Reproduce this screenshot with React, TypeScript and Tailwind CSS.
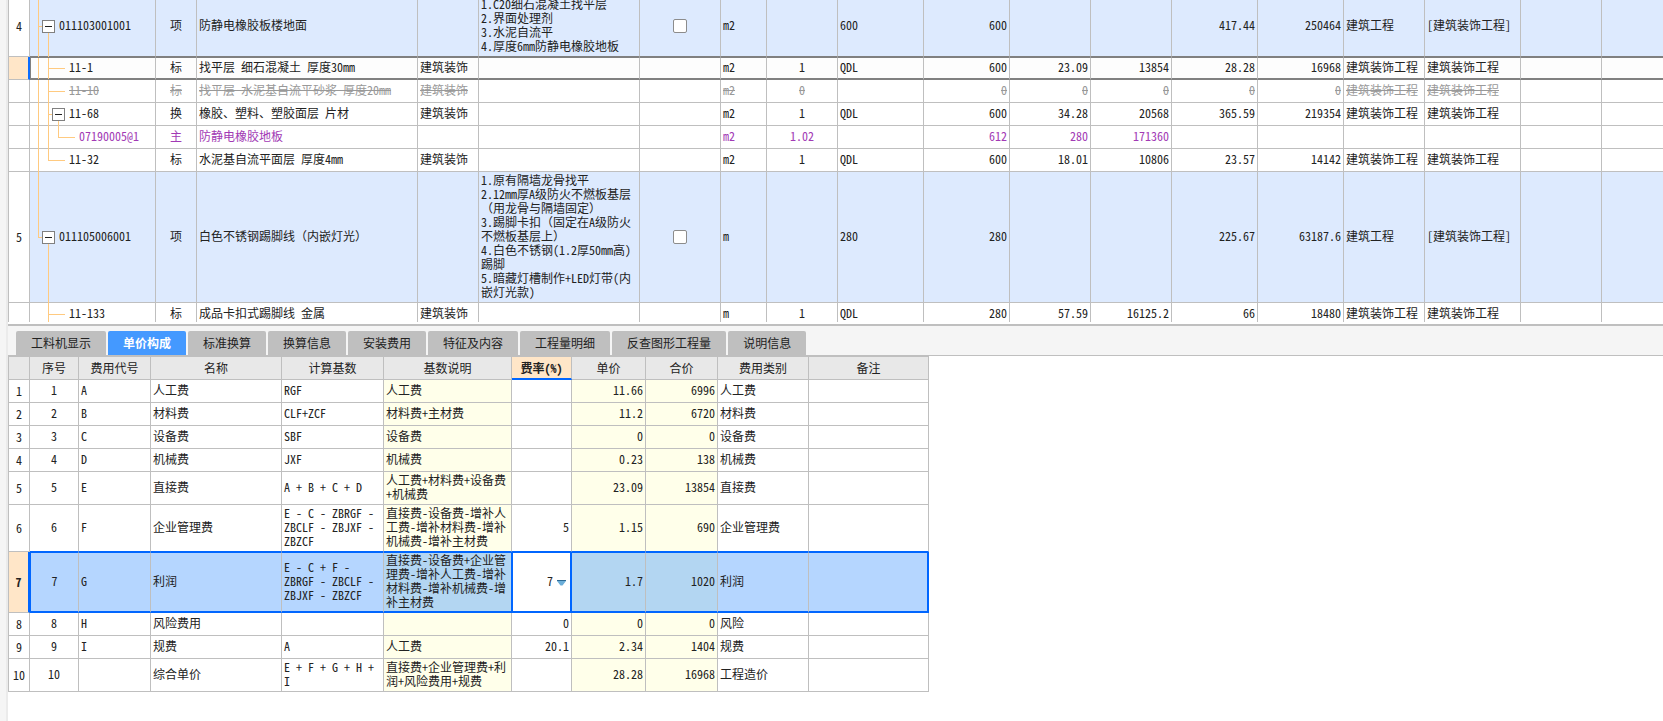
import React from "react";
import clsx from "clsx";

type Kind = "item" | "selected" | "deleted" | "main" | "normal";

interface BillRow {
  no?: string;
  code: string;
  kind: Kind;
  level: number;
  open?: boolean;
  guides: string[];
  type: string;
  name: string;
  spec?: string;
  feature?: string;
  unit: string;
  content?: string;
  expr?: string;
  qty: string;
  price?: string;
  total?: string;
  compPrice?: string;
  compTotal?: string;
  feeFile?: string;
  feeMajor?: string;
  height: string;
}

// Guide segments of the tree, drawn from the left edge of the code cell.
const TRUNK_1 = "left-[8px] top-0 -bottom-px w-px";
const TRUNK_1_END = "left-[8px] top-0 bottom-1/2 w-px";
const STUB_1 = "left-[8px] top-1/2 h-px w-[5px]";
const TRUNK_2 = "left-[18px] top-0 -bottom-px w-px";
const TRUNK_2_START = "left-[18px] top-1/2 -bottom-px w-px";
const TRUNK_2_END = "left-[18px] top-0 bottom-1/2 w-px";
const LEAF_2 = "left-[18px] top-1/2 h-px w-[17px]";
const STUB_2 = "left-[18px] top-1/2 h-px w-[5px]";
const TRUNK_3_START = "left-[28px] top-1/2 -bottom-px w-px";
const TRUNK_3_END = "left-[28px] top-0 bottom-1/2 w-px";
const LEAF_3 = "left-[28px] top-1/2 h-px w-[17px]";

const billRows: BillRow[] = [
  {
    no: "4", code: "011103001001", kind: "item", level: 0, open: true,
    guides: [TRUNK_1, STUB_1, TRUNK_2_START], type: "项", name: "防静电橡胶板楼地面",
    feature: "1.C20细石混凝土找平层\n2.界面处理剂\n3.水泥自流平\n4.厚度6mm防静电橡胶地板",
    unit: "m2", expr: "600", qty: "600", compPrice: "417.44", compTotal: "250464",
    feeFile: "建筑工程", feeMajor: "[建筑装饰工程]", height: "h-[62px]",
  },
  {
    code: "11-1", kind: "selected", level: 1, guides: [TRUNK_1, TRUNK_2, LEAF_2],
    type: "标", name: "找平层 细石混凝土 厚度30mm", spec: "建筑装饰", unit: "m2",
    content: "1", expr: "QDL", qty: "600", price: "23.09", total: "13854",
    compPrice: "28.28", compTotal: "16968", feeFile: "建筑装饰工程", feeMajor: "建筑装饰工程",
    height: "h-[23px]",
  },
  {
    code: "11-10", kind: "deleted", level: 1, guides: [TRUNK_1, TRUNK_2, LEAF_2],
    type: "标", name: "找平层 水泥基自流平砂浆 厚度20mm", spec: "建筑装饰", unit: "m2",
    content: "0", qty: "0", price: "0", total: "0", compPrice: "0", compTotal: "0",
    feeFile: "建筑装饰工程", feeMajor: "建筑装饰工程", height: "h-[23px]",
  },
  {
    code: "11-68", kind: "normal", level: 1, open: true,
    guides: [TRUNK_1, TRUNK_2, STUB_2, TRUNK_3_START],
    type: "换", name: "橡胶、塑料、塑胶面层 片材", spec: "建筑装饰", unit: "m2",
    content: "1", expr: "QDL", qty: "600", price: "34.28", total: "20568",
    compPrice: "365.59", compTotal: "219354", feeFile: "建筑装饰工程", feeMajor: "建筑装饰工程",
    height: "h-[23px]",
  },
  {
    code: "07190005@1", kind: "main", level: 2, guides: [TRUNK_1, TRUNK_2, TRUNK_3_END, LEAF_3],
    type: "主", name: "防静电橡胶地板", unit: "m2", content: "1.02", qty: "612",
    price: "280", total: "171360", height: "h-[23px]",
  },
  {
    code: "11-32", kind: "normal", level: 1, guides: [TRUNK_1, TRUNK_2_END, LEAF_2],
    type: "标", name: "水泥基自流平面层 厚度4mm", spec: "建筑装饰", unit: "m2",
    content: "1", expr: "QDL", qty: "600", price: "18.01", total: "10806",
    compPrice: "23.57", compTotal: "14142", feeFile: "建筑装饰工程", feeMajor: "建筑装饰工程",
    height: "h-[23px]",
  },
  {
    no: "5", code: "011105006001", kind: "item", level: 0, open: true,
    guides: [TRUNK_1_END, STUB_1, TRUNK_2_START], type: "项", name: "白色不锈钢踢脚线（内嵌灯光）",
    feature:
      "1.原有隔墙龙骨找平\n2.12mm厚A级防火不燃板基层\n（用龙骨与隔墙固定）\n3.踢脚卡扣（固定在A级防火\n不燃板基层上）\n4.白色不锈钢(1.2厚50mm高)\n踢脚\n5.暗藏灯槽制作+LED灯带(内\n嵌灯光款)",
    unit: "m", expr: "280", qty: "280", compPrice: "225.67", compTotal: "63187.6",
    feeFile: "建筑工程", feeMajor: "[建筑装饰工程]", height: "h-[131px]",
  },
  {
    code: "11-133", kind: "normal", level: 1, guides: [TRUNK_2, LEAF_2],
    type: "标", name: "成品卡扣式踢脚线 金属", spec: "建筑装饰", unit: "m",
    content: "1", expr: "QDL", qty: "280", price: "57.59", total: "16125.2",
    compPrice: "66", compTotal: "18480", feeFile: "建筑装饰工程", feeMajor: "建筑装饰工程",
    height: "h-[23px]",
  },
];

const billCols = [
  "w-[21px]", "w-[126px]", "w-[41px]", "w-[221px]", "w-[61px]", "w-[161px]", "w-[81px]",
  "w-[46px]", "w-[71px]", "w-[86px]", "w-[86px]", "w-[81px]", "w-[81px]", "w-[86px]",
  "w-[86px]", "w-[81px]", "w-[96px]", "w-[81px]", "",
];

// Full-width brackets keep their full width while Latin text is set half-width.
function withFullWidth(value?: string) {
  if (!value || !/[（）]/.test(value)) return value;
  return value.split(/([（）])/).map((part, i) =>
    part === "（" || part === "）" ? (
      <span key={i} className="[font-feature-settings:normal]">{part}</span>
    ) : (
      part
    ),
  );
}

function BillTableRow({ row, beforeSelected }: { row: BillRow; beforeSelected: boolean }) {
  const selected = row.kind === "selected";
  const line = clsx(
    "border-r border-r-[#bfbfbf] px-[2px]",
    selected
      ? "border-t border-b-2 border-t-[#808080] border-b-[#808080]"
      : beforeSelected
        ? "border-b border-b-[#808080]"
        : "border-b border-b-[#bfbfbf]",
  );
  const cell = clsx(line, "pb-[2px]");
  const text = (value?: string) =>
    row.kind === "deleted" && value ? <span className="line-through">{value}</span> : withFullWidth(value);

  return (
    <tr
      className={clsx(
        row.height,
        row.kind === "item" && "bg-[#ddeafe]",
        selected && "bg-[#fdfdfd]",
        row.kind === "deleted" && "text-[#999999]",
        row.kind === "main" && "text-[#a23ab5]",
      )}
    >
      <th
        scope="row"
        className={clsx(
          "border-b border-b-[#bfbfbf] text-center font-normal",
          selected
            ? "border-r-2 border-r-[#0a6cff] bg-[#ffe6c8]"
            : "border-r border-r-[#bfbfbf] bg-white",
        )}
      >
        {row.no}
      </th>
      <td
        className={clsx(
          cell,
          "relative",
          selected && "border-l border-l-[#808080]",
          row.level === 0 && "pl-[29px]",
          row.level === 1 && (selected ? "pl-[38px]" : "pl-[39px]"),
          row.level === 2 && "pl-[49px]",
        )}
      >
        {row.guides.map((guide) => (
          <span key={guide} aria-hidden="true" className={clsx("absolute bg-[#ffca80]", guide, selected && "-ml-px")} />
        ))}
        {row.open && (
          <button
            type="button"
            aria-label="折叠"
            className={clsx(
              "absolute top-1/2 -mt-[6px] flex size-[13px] items-center justify-center border border-[#808080] bg-white",
              row.level === 0 ? "left-[12px]" : "left-[22px]",
            )}
          >
            <span className="h-px w-[7px] bg-[#222222]" />
          </button>
        )}
        {text(row.code)}
      </td>
      <td className={clsx(cell, "text-center")}>{text(row.type)}</td>
      <td className={cell}>{text(row.name)}</td>
      <td className={cell}>{text(row.spec)}</td>
      <td className={clsx(cell, "whitespace-pre")}>{withFullWidth(row.feature)}</td>
      <td className={clsx(line, "text-center")}>
        {row.kind === "item" && (
          <input
            type="checkbox"
            aria-label="主要清单"
            className="mx-auto block size-[14px] appearance-none rounded-[2px] border border-[#8c8c8c] bg-white"
          />
        )}
      </td>
      <td className={cell}>{text(row.unit)}</td>
      <td className={clsx(cell, "text-center")}>{text(row.content)}</td>
      <td className={cell}>{text(row.expr)}</td>
      <td className={clsx(cell, "text-right")}>{text(row.qty)}</td>
      <td className={clsx(cell, "text-right")}>{text(row.price)}</td>
      <td className={clsx(cell, "text-right")}>{text(row.total)}</td>
      <td className={clsx(cell, "text-right")}>{text(row.compPrice)}</td>
      <td className={clsx(cell, "text-right")}>{text(row.compTotal)}</td>
      <td className={cell}>{text(row.feeFile)}</td>
      <td className={cell}>{text(row.feeMajor)}</td>
      <td className={cell} />
      <td className={clsx(cell, "border-r-0")} />
    </tr>
  );
}

const tabs = [
  "工料机显示", "单价构成", "标准换算", "换算信息", "安装费用",
  "特征及内容", "工程量明细", "反查图形工程量", "说明信息",
];

interface FeeRow {
  code: string;
  name: string;
  base: string;
  note: string;
  rate: string;
  price: string;
  total: string;
  type: string;
  height: string;
}

const feeRows: FeeRow[] = [
  { code: "A", name: "人工费", base: "RGF", note: "人工费", rate: "", price: "11.66", total: "6996", type: "人工费", height: "h-[23px]" },
  { code: "B", name: "材料费", base: "CLF+ZCF", note: "材料费+主材费", rate: "", price: "11.2", total: "6720", type: "材料费", height: "h-[23px]" },
  { code: "C", name: "设备费", base: "SBF", note: "设备费", rate: "", price: "0", total: "0", type: "设备费", height: "h-[23px]" },
  { code: "D", name: "机械费", base: "JXF", note: "机械费", rate: "", price: "0.23", total: "138", type: "机械费", height: "h-[23px]" },
  { code: "E", name: "直接费", base: "A + B + C + D", note: "人工费+材料费+设备费\n+机械费", rate: "", price: "23.09", total: "13854", type: "直接费", height: "h-[33px]" },
  { code: "F", name: "企业管理费", base: "E - C - ZBRGF -\nZBCLF - ZBJXF -\nZBZCF", note: "直接费-设备费-增补人\n工费-增补材料费-增补\n机械费-增补主材费", rate: "5", price: "1.15", total: "690", type: "企业管理费", height: "h-[47px]" },
  { code: "G", name: "利润", base: "E - C + F -\nZBRGF - ZBCLF -\nZBJXF - ZBZCF", note: "直接费-设备费+企业管\n理费-增补人工费-增补\n材料费-增补机械费-增\n补主材费", rate: "7", price: "1.7", total: "1020", type: "利润", height: "h-[61px]" },
  { code: "H", name: "风险费用", base: "", note: "", rate: "0", price: "0", total: "0", type: "风险", height: "h-[23px]" },
  { code: "I", name: "规费", base: "A", note: "人工费", rate: "20.1", price: "2.34", total: "1404", type: "规费", height: "h-[23px]" },
  { code: "", name: "综合单价", base: "E + F + G + H +\nI", note: "直接费+企业管理费+利\n润+风险费用+规费", rate: "", price: "28.28", total: "16968", type: "工程造价", height: "h-[33px]" },
];

const SELECTED_FEE = 6;

const feeCols: [string, string][] = [
  ["", "w-[21px]"], ["序号", "w-[49px]"], ["费用代号", "w-[72px]"], ["名称", "w-[131px]"],
  ["计算基数", "w-[102px]"], ["基数说明", "w-[128px]"], ["费率(%)", "w-[60px]"],
  ["单价", "w-[74px]"], ["合价", "w-[72px]"], ["费用类别", "w-[91px]"], ["备注", "w-[120px]"],
];

function FeeTableRow({ row, index }: { row: FeeRow; index: number }) {
  const selected = index === SELECTED_FEE;
  const line = clsx(
    "border-r px-[2px] pb-[2px]",
    selected
      ? "border-t border-b-2 border-t-[#0066ff] border-b-[#0066ff]"
      : index === SELECTED_FEE - 1
        ? "border-b border-b-[#0066ff]"
        : "border-b border-b-[#bfbfbf]",
  );
  const grayRight = "border-r-[#bfbfbf]";
  const tint = selected ? "bg-[#b3d6f2]" : "bg-[#ffffea]";

  return (
    <tr className={clsx(row.height, selected && "bg-[#b5d6ff]")}>
      <th
        scope="row"
        className={clsx(
          "border-b border-b-[#bfbfbf] text-center",
          selected
            ? "border-r-2 border-r-[#0066ff] bg-[#ffe6c8] font-bold"
            : "border-r border-r-[#bfbfbf] font-normal",
        )}
      >
        {index + 1}
      </th>
      <td className={clsx(line, grayRight, "text-center", selected && "border-l border-l-[#0066ff]")}>{index + 1}</td>
      <td className={clsx(line, grayRight)}>{row.code}</td>
      <td className={clsx(line, grayRight)}>{row.name}</td>
      <td className={clsx(line, grayRight, "whitespace-pre")}>{row.base}</td>
      <td className={clsx(line, tint, "whitespace-pre", selected ? "border-r-[#0066ff]" : grayRight)}>{row.note}</td>
      <td
        className={clsx(
          line,
          "text-right",
          selected ? "border-r-2 border-l border-r-[#0066ff] border-l-[#0066ff] bg-white" : grayRight,
        )}
      >
        {selected ? (
          <div className="flex items-center justify-end gap-1 pr-[2px]">
            <select
              aria-label="费率(%)"
              defaultValue={row.rate}
              className="h-[14px] w-[36px] appearance-none bg-transparent p-0 text-right leading-[14px] [text-align-last:right]"
            >
              <option>{row.rate}</option>
            </select>
            <svg aria-hidden="true" width="9" height="6" viewBox="0 0 9 6" className="mt-[3px] shrink-0">
              <path d="M0 1h9L5.5 5.5h-2z" fill="#6baed9" />
              <path d="M0 0h9v1H0z" fill="#2d6a94" />
            </svg>
          </div>
        ) : (
          row.rate
        )}
      </td>
      <td className={clsx(line, tint, grayRight, "text-right")}>{row.price}</td>
      <td className={clsx(line, tint, grayRight, "text-right")}>{row.total}</td>
      <td className={clsx(line, grayRight)}>{row.type}</td>
      <td className={clsx(line, selected ? "border-r-2 border-r-[#0066ff]" : grayRight)} />
    </tr>
  );
}

export default function App() {
  return (
    <div className="flex min-h-screen bg-white font-['Noto_Sans_CJK_SC',sans-serif] text-[12px] leading-[14px] text-[#222222] [font-feature-settings:'hwid'] [text-spacing-trim:space-all]">
      <div className="w-2 shrink-0 border-r-2 border-[#ebebeb] bg-[#f5f5f5]" />
      <main className="min-w-0 flex-1">
        <section className="h-[322px] overflow-hidden">
          <table className="-mt-[5px] w-full table-fixed border-separate border-spacing-0 border-l border-[#bfbfbf] whitespace-nowrap">
            <colgroup>
              {billCols.map((width, i) => (
                <col key={i} className={width} />
              ))}
            </colgroup>
            <tbody>
              {billRows.map((row, i) => (
                <BillTableRow key={row.code} row={row} beforeSelected={billRows[i + 1]?.kind === "selected"} />
              ))}
            </tbody>
          </table>
        </section>

        <nav
          role="tablist"
          className="mt-[2px] flex gap-[2px] border-t-2 border-b border-[#bfbfbf] bg-[#f5f5f5] pt-[5px] pl-2"
        >
          {tabs.map((tab, i) => (
            <button
              key={tab}
              type="button"
              role="tab"
              aria-selected={i === 1}
              className={clsx(
                "h-6 rounded-t-[2px] px-[15px]",
                i === 1 ? "bg-[#4499ff] font-bold text-white" : "bg-[#bfbfbf]",
              )}
            >
              {tab}
            </button>
          ))}
        </nav>

        <table className="w-[921px] table-fixed border-separate border-spacing-0 border-t border-l border-[#bfbfbf] whitespace-nowrap">
          <thead>
            <tr className="h-[23px] bg-[#e8e8e8]">
              {feeCols.map(([label, width]) => (
                <th
                  key={label}
                  scope="col"
                  className={clsx(
                    width,
                    "border-r border-r-[#bfbfbf] text-center",
                    label === "费率(%)"
                      ? "border-b-2 border-b-[#0066ff] bg-[#ffe6c8] font-bold"
                      : "border-b border-b-[#bfbfbf] font-normal",
                  )}
                >
                  {label}
                </th>
              ))}
            </tr>
          </thead>
          <tbody>
            {feeRows.map((row, i) => (
              <FeeTableRow key={row.name} row={row} index={i} />
            ))}
          </tbody>
        </table>
      </main>
    </div>
  );
}
